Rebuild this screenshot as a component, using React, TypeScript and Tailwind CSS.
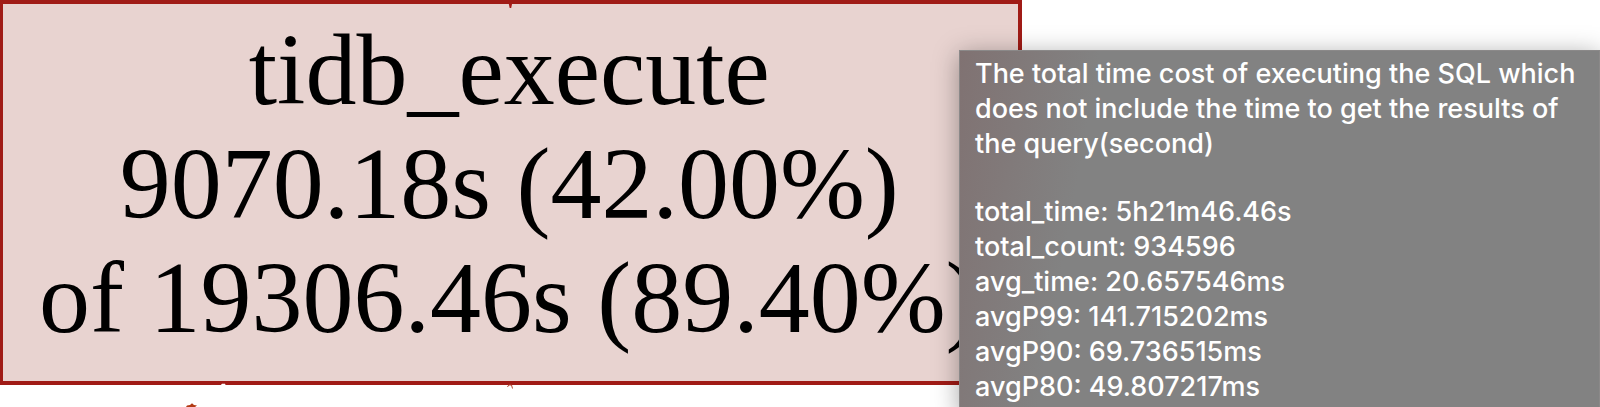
const measures = [
  'total_time: 5h21m46.46s',
  'total_count: 934596',
  'avg_time: 20.657546ms',
  'avgP99: 141.715202ms',
  'avgP90: 69.736515ms',
  'avgP80: 49.807217ms',
];

function EdgeTips() {
  return (
    <>
      <svg className="absolute top-1 left-[508px]" width="5" height="4" viewBox="0 0 5 4" aria-hidden="true">
        <path d="M0.8 0H4L3.2 4H1.7Z" fill="#a61b17" />
      </svg>
      <svg className="absolute top-[384px] left-[507px]" width="7" height="5" viewBox="0 0 7 5" aria-hidden="true">
        <path d="M0.5 3L1.7 1H4.5L5.5 4.5" fill="none" stroke="#b5452f" strokeWidth="1" />
      </svg>
      <svg className="absolute top-[383px] left-[217px]" width="12" height="3" viewBox="0 0 12 3" aria-hidden="true">
        <path d="M3 3L5 0.8H8L9 3Z" fill="#fff" />
      </svg>
      <svg className="absolute top-[403px] left-[186px]" width="12" height="4" viewBox="0 0 12 4" aria-hidden="true">
        <path d="M0 4L1 2.5L4 2L6 0.3L8 2L11 2.5L9 4Z" fill="#b23a14" />
      </svg>
    </>
  );
}

export default function App() {
  return (
    <main className="relative h-screen overflow-hidden bg-white">
      <section className="flex w-fit flex-col items-center border-4 border-l-3 border-[#a01b16] bg-[#e8d3d0] pt-[9px] pr-[38px] pb-[26px] pl-9 font-['Liberation_Serif',serif] text-[102px] leading-[114px] whitespace-nowrap text-black">
        <p>tidb_execute</p>
        <p>9070.18s (42.00%)</p>
        <p>of 19306.46s (89.40%)</p>
      </section>
      <EdgeTips />
      <aside className="absolute top-[50px] right-0 -bottom-2 left-[calc(60%-1px)] border border-[#8b8989] bg-[#828282] bg-linear-[100deg,#807272,#828282_20%] pt-[5px] pl-[15px] font-[Inter,sans-serif] text-[27px] leading-[35px] font-medium whitespace-nowrap text-white shadow-[0_4px_24px_rgba(0,0,0,0.35)]">
        <p>
          The total time cost of executing the SQL which
          <br />
          does not include the time to get the results of
          <br />
          the query(second)
        </p>
        <ul className="mt-[33px]">
          {measures.map((m) => (
            <li key={m}>{m}</li>
          ))}
        </ul>
      </aside>
    </main>
  );
}
